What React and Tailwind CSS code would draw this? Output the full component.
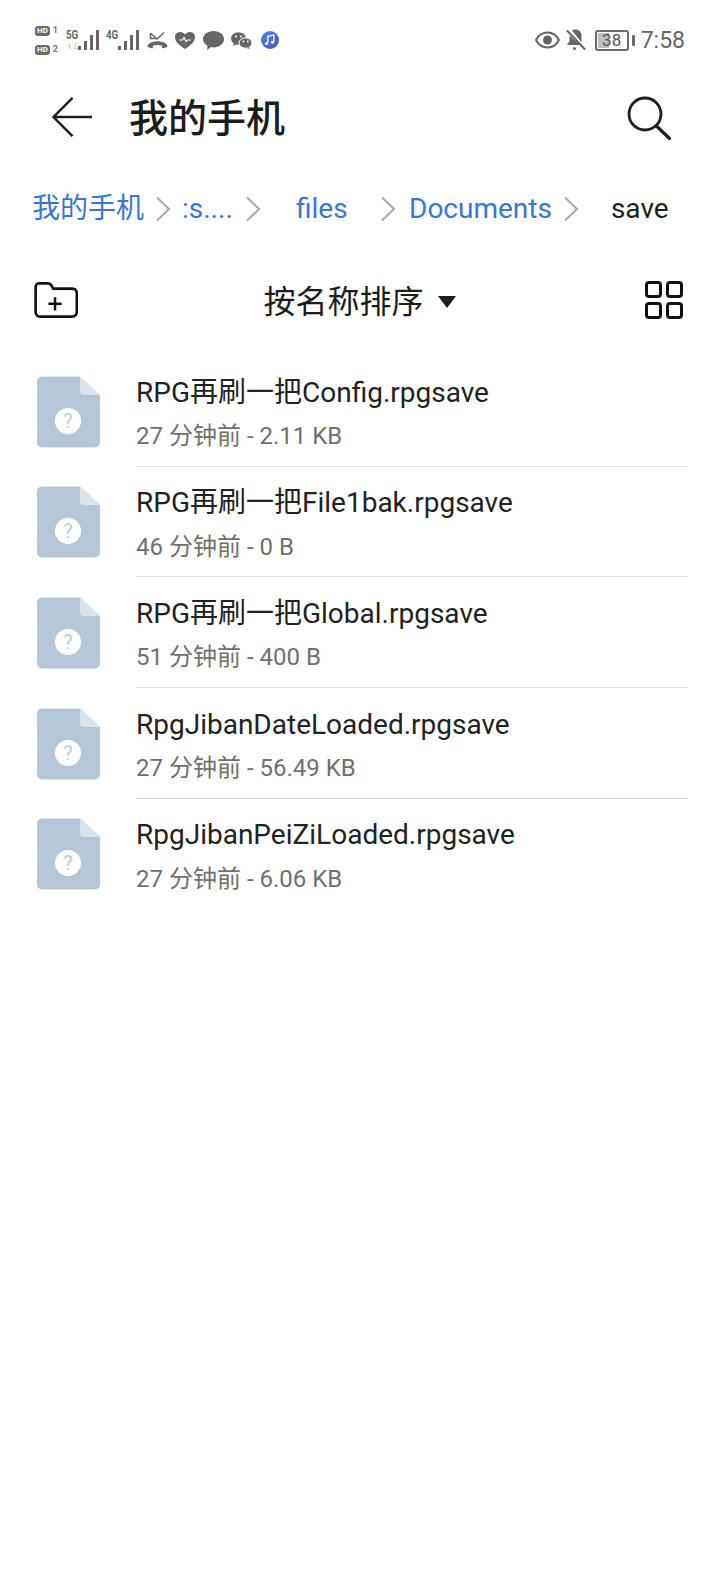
import React from "react";

function Hd({ n }) {
  return (
    <div className="flex items-center gap-[3px]">
      <div className="flex h-[10px] w-[15px] items-center justify-center rounded-[3px] bg-[#6b6b6b] text-[8px] leading-none font-bold text-white">HD</div>
      <span className="text-[9px] leading-none font-bold text-[#777777]">{n}</span>
    </div>
  );
}

function Bars() {
  const hs = [4, 9, 15, 20];
  return (
    <div className="flex items-end gap-[3px]">
      {hs.map((h) => (
        <div key={h} className="w-[3px] bg-[#666666]" style={{ height: h }} />
      ))}
    </div>
  );
}

function StatusLeft() {
  return (
    <div className="flex items-center">
      <div className="flex w-[23px] flex-col gap-[9px]">
        <Hd n="1" />
        <Hd n="2" />
      </div>
      <div className="relative ml-[8px] h-[20px] w-[33px]">
        <span className="absolute top-0 left-0 origin-left scale-x-75 text-[13px] leading-[10px] font-bold text-[#666666]">5G</span>
        <span className="absolute bottom-0 left-[1px] text-[8px] leading-[7px] font-bold text-[#c4c4c4]">1↓</span>
        <div className="absolute right-0 bottom-0"><Bars /></div>
      </div>
      <div className="relative ml-[7px] h-[20px] w-[33px]">
        <span className="absolute top-0 left-0 origin-left scale-x-75 text-[13px] leading-[10px] font-bold text-[#666666]">4G</span>
        <div className="absolute right-0 bottom-0"><Bars /></div>
      </div>
      <svg className="ml-[8px]" width="21" height="17" viewBox="0 0 21 17" fill="none">
        <path d="M3.500 1v5.500H9M3.500 1.200L10 7l7-6.500" stroke="#666" strokeWidth="1.500" />
        <path d="M.5 15c0-2 .8-3 2.500-4 4.500-2.400 10.500-2.400 15 0 1.700 1 2.500 2 2.500 4l-5 1.500-.8-3c-3-.8-5.400-.8-8.400 0l-.8 3z" fill="#666" />
      </svg>
      <svg className="ml-[7px]" width="20" height="17" viewBox="0 0 20 17">
        <path d="M10 17C5 13.500 0 10 0 5.200 0 2.200 2.300 0 5.200 0 7.200 0 9 1 10 2.500 11 1 12.800 0 14.800 0 17.700 0 20 2.200 20 5.200 20 10 15 13.500 10 17z" fill="#666" />
        <path d="M4 8h3.500l1.500-2.500 2 4L12.500 8H16" stroke="#fff" strokeWidth="1.200" fill="none" />
      </svg>
      <svg className="ml-[8px]" width="21" height="19" viewBox="0 0 21 19">
        <path d="M10.500 0C16.300 0 21 3.600 21 8.200s-4.700 8.200-10.500 8.200c-.9 0-1.700-.1-2.600-.3L4.200 19l.3-4.200C2 13.300 0 11 0 8.200 0 3.600 4.700 0 10.500 0z" fill="#666" />
      </svg>
      <svg className="ml-[7px]" width="21" height="17" viewBox="0 0 21 17">
        <ellipse cx="7.500" cy="6.500" rx="7.500" ry="6.300" fill="#666" />
        <path d="M3 10.500l-1 3.500 4-2z" fill="#666" />
        <ellipse cx="14.500" cy="11" rx="6.500" ry="5.200" fill="#666" stroke="#fff" strokeWidth="1" />
        <path d="M17.500 15l1.500 2-3.500-1z" fill="#666" />
        <circle cx="5" cy="4.500" r="1" fill="#fff" />
        <circle cx="10" cy="4.500" r="1" fill="#fff" />
        <circle cx="12.500" cy="9.500" r=".9" fill="#fff" />
        <circle cx="16.800" cy="9.500" r=".9" fill="#fff" />
      </svg>
      <svg className="ml-[9px]" width="18" height="18" viewBox="0 0 18 18">
        <defs>
          <linearGradient id="m" x1="0" y1="0" x2="1" y2="1">
            <stop offset="0" stopColor="#3f8fe0" />
            <stop offset="1" stopColor="#5a45c8" />
          </linearGradient>
        </defs>
        <circle cx="9" cy="9" r="9" fill="url(#m)" />
        <path d="M6.800 12.300V5.300l6-1.200v7" stroke="#fff" strokeWidth="1.300" fill="none" />
        <circle cx="5.500" cy="12.400" r="1.500" fill="#fff" />
        <circle cx="11.500" cy="11.200" r="1.500" fill="#fff" />
      </svg>
    </div>
  );
}

function StatusRight() {
  return (
    <div className="flex items-center">
      <svg width="25" height="18" viewBox="0 0 25 18" fill="none">
        <path d="M1 9c2.500-4.800 6.500-7.500 11.500-7.500S21.500 4.200 24 9c-2.500 4.800-6.500 7.500-11.500 7.500S3.500 13.800 1 9z" stroke="#666" strokeWidth="2" />
        <circle cx="12.500" cy="9" r="4.500" fill="#666" />
      </svg>
      <svg className="ml-[6px]" width="20" height="22" viewBox="0 0 20 22" fill="none">
        <path d="M6 1.500C7 .8 8.500.5 9.500.5c3.500 0 6 2.500 6 6.500v6.500z" fill="#666" />
        <path d="M3.500 6.500V12L1 16h13z" fill="#666" />
        <path d="M1 1.500L19 20.500" stroke="#666" strokeWidth="2" />
        <circle cx="8.500" cy="19.500" r="1.500" fill="#666" />
      </svg>
      <div className="ml-[9px] flex items-center">
        <div className="relative flex h-[21px] w-[34px] items-center justify-center overflow-hidden rounded-[3px] border-2 border-[#6a6a6a] text-[17px] leading-none text-[#555555]">
          <div className="absolute top-[1px] bottom-[1px] left-[1px] w-[11px] bg-[#bdbdbd]" />
          <span className="relative">38</span>
        </div>
        <div className="ml-[3px] h-[11px] w-[3px] rounded-[1px] bg-[#6a6a6a]" />
      </div>
      <span className="ml-[6px] text-[23px] leading-none text-[#666666]">7:58</span>
    </div>
  );
}

function Chevron() {
  return (
    <svg width="16" height="26" viewBox="0 0 16 26" fill="none" className="block shrink-0">
      <path d="M2 1.500L14 13 2 24.500" stroke="#a9a9a9" strokeWidth="2" />
    </svg>
  );
}

function FileIcon() {
  return (
    <svg width="63" height="72" viewBox="0 0 63 72" className="block shrink-0">
      <path d="M5 .5h38L63 19v47.500a5 5 0 0 1-5 5H5a5 5 0 0 1-5-5v-61a5 5 0 0 1 5-5z" fill="#b5c7d6" />
      <path d="M43 .5L63 19H47a4 4 0 0 1-4-4z" fill="#d9e3ec" />
      <circle cx="31" cy="45" r="13" fill="#ffffff" />
      <text x="31" y="52" textAnchor="middle" fontSize="20" fill="#c0cfdc" fontFamily="Roboto, sans-serif">?</text>
    </svg>
  );
}

const files = [
  ["RPG再刷一把Config.rpgsave", "27 分钟前 - 2.11 KB"],
  ["RPG再刷一把File1bak.rpgsave", "46 分钟前 - 0 B"],
  ["RPG再刷一把Global.rpgsave", "51 分钟前 - 400 B"],
  ["RpgJibanDateLoaded.rpgsave", "27 分钟前 - 56.49 KB"],
  ["RpgJibanPeiZiLoaded.rpgsave", "27 分钟前 - 6.06 KB"],
];

export default function App() {
  return (
    <div className="h-[1592px] w-[720px] overflow-hidden bg-white font-['Roboto','Noto_Sans_CJK_SC',sans-serif]">
      <div className="flex h-[80px] items-center justify-between pr-[35px] pl-[35px]">
        <StatusLeft />
        <StatusRight />
      </div>

      <div className="flex h-[75px] items-center justify-between pr-[49px] pl-[52px]">
        <div className="flex items-center">
          <svg className="mb-[2px]" width="40" height="40" viewBox="0 0 40 40" fill="none">
            <path d="M20.500 .8L1.500 20l19 19.200M1.500 20H40" stroke="#1f1f1f" strokeWidth="2.400" />
          </svg>
          <span className="mt-[3px] ml-[37px] text-[39px] leading-none font-medium text-[#1c1c1c]">我的手机</span>
        </div>
        <svg width="44" height="44" viewBox="0 0 44 44" fill="none">
          <circle cx="18" cy="18" r="16" stroke="#1f1f1f" strokeWidth="2.800" />
          <path d="M29.500 30L42.500 42.500" stroke="#1f1f1f" strokeWidth="3.200" strokeLinecap="round" />
        </svg>
      </div>

      <div className="flex h-[108px] items-center pl-[32px] text-[28px] leading-none whitespace-nowrap text-[#3a75d8]">
        <span className="w-[108px] shrink-0">我的手机</span>
        <span className="ml-[15px]"><Chevron /></span>
        <span className="ml-[11px] w-[49px] shrink-0">:s....</span>
        <span className="ml-[14px]"><Chevron /></span>
        <span className="ml-[35px] w-[51px] shrink-0">files</span>
        <span className="ml-[33px]"><Chevron /></span>
        <span className="ml-[13px] shrink-0">Documents</span>
        <span className="ml-[11px]"><Chevron /></span>
        <span className="ml-[32px] shrink-0 text-[#1f1f1f]">save</span>
      </div>

      <div className="flex h-[74px] items-center justify-between pr-[37px] pl-[34px]">
        <svg width="44" height="36" viewBox="0 0 46 38" fill="none">
          <path d="M1.500 5a3.500 3.500 0 0 1 3.500-3.500h9.500c2 0 3 .8 4 2.500l1.500 3h20a5 5 0 0 1 5 5v19.500a5 5 0 0 1-5 5H6a4.500 4.500 0 0 1-4.500-4.500z" stroke="#111" strokeWidth="2.800" />
          <path d="M20 7.500h24" stroke="#111" strokeWidth="2" />
          <path d="M22 16v14M15 23h14" stroke="#111" strokeWidth="2.600" />
        </svg>
        <div className="mt-[3px] mr-[4px] flex items-center">
          <span className="text-[32px] leading-none text-[#1c1c1c]">按名称排序</span>
          <div className="ml-[14px] h-0 w-0 border-x-[9px] border-t-[12px] border-x-transparent border-t-[#1c1c1c]" />
        </div>
        <div className="grid grid-cols-2 gap-[4px]">
          {[0, 1, 2, 3].map((i) => (
            <div key={i} className="h-[17px] w-[17px] rounded-[4px] border-[3px] border-[#111111]" />
          ))}
        </div>
      </div>

      <div className="pt-[19px]">
        {files.map(([name, meta], i) => (
          <div key={name} className="flex h-[110.7px] pl-[37px]">
            <div className="pt-[19.5px]">
              <FileIcon />
            </div>
            <div className={"mr-[32px] ml-[36px] flex-1 " + (i < files.length - 1 ? "border-b border-[#dedede]" : "")}>
              <div className="pt-[18.5px] text-[28px] leading-[36px] text-[#222222]">{name}</div>
              <div className="pt-[10.5px] text-[24px] leading-[30px] text-[#707070]">{meta}</div>
            </div>
          </div>
        ))}
      </div>
    </div>
  );
}
